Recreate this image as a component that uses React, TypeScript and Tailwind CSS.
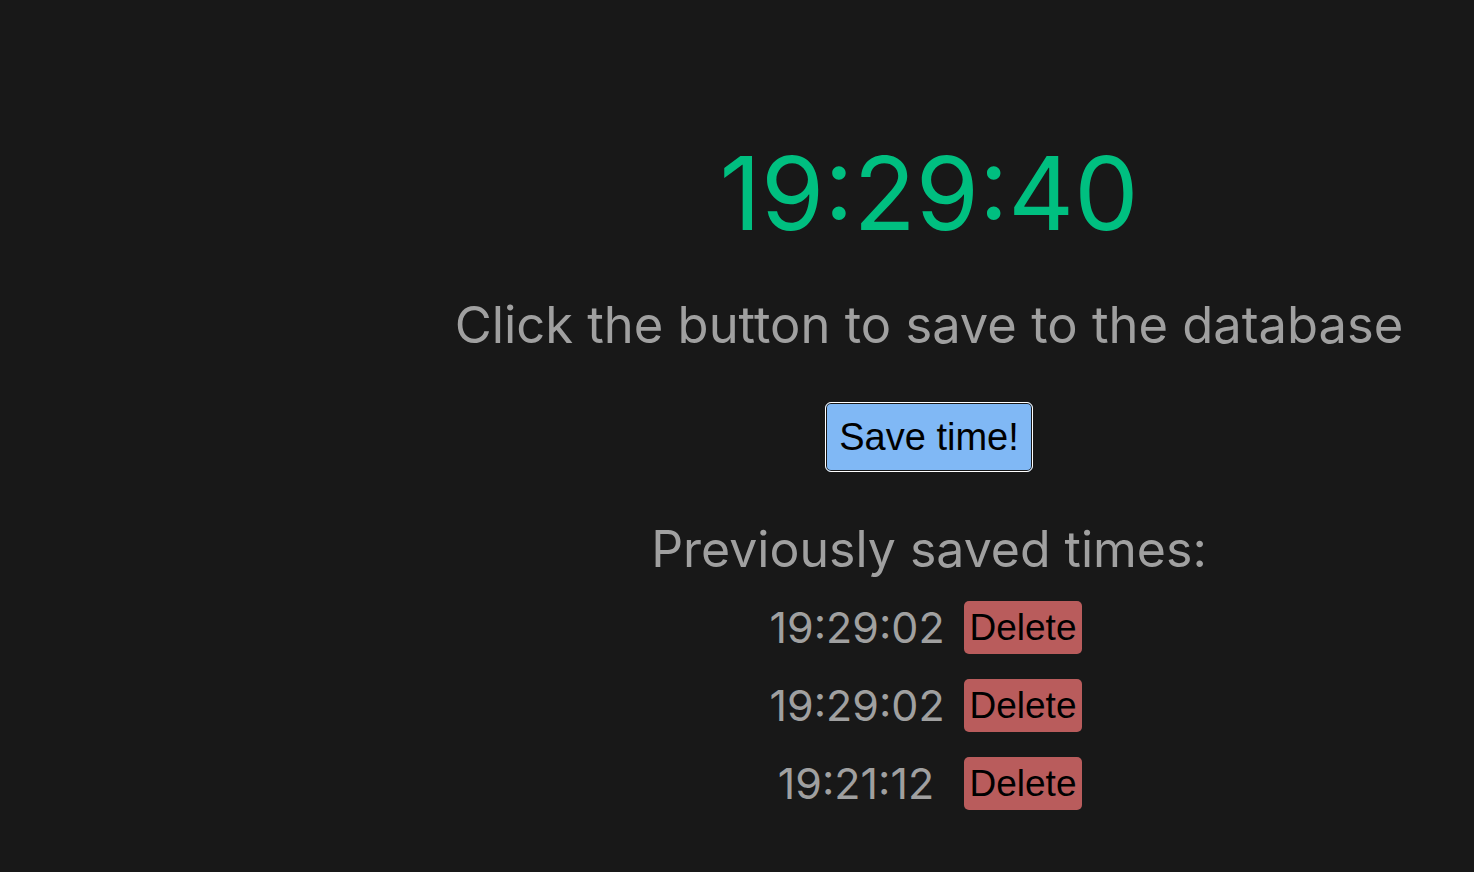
import { useState } from "react";

const initialTimes = ["19:29:02", "19:29:02", "19:21:12"];

export default function App() {
  const [times, setTimes] = useState(initialTimes);

  return (
    <div className="flex min-h-[872px] w-full bg-[#181818] font-['Inter',sans-serif]">
      <div className="w-[384px] shrink-0" />
      <main className="flex flex-1 flex-col items-center pt-[133px]">
        <h1 className="text-[102px] leading-[120px] font-normal text-[#00bf80]">19:29:40</h1>
        <p className="mt-[41px] text-[50.7px] leading-[62px] text-[#a0a0a0]">
          Click the button to save to the database
        </p>
        <button
          type="button"
          className="mt-[46px] h-[70px] rounded-[6px] border border-white bg-[#80b8f5] px-[13px] font-['Liberation_Sans',Arial,sans-serif] text-[38px] text-black shadow-[inset_0_0_0_1px_#181818]"
        >
          Save time!
        </button>
        <h2 className="mt-[46px] text-[50px] leading-[62px] text-[#a0a0a0]">Previously saved times:</h2>
        <ul className="mt-[21px] flex flex-col gap-[25px] pr-[6px]">
          {times.map((t, i) => (
            <li key={i} className="flex items-center gap-[21px]">
              <span className="w-[173px] text-center text-[43px] leading-[53px] text-[#a0a0a0]">{t}</span>
              <button
                type="button"
                onClick={() => setTimes(times.filter((_, j) => j !== i))}
                className="h-[53px] rounded-[5px] bg-[#b95c5c] px-[6px] font-['Liberation_Sans',Arial,sans-serif] text-[37px] leading-[53px] text-black"
              >
                Delete
              </button>
            </li>
          ))}
        </ul>
      </main>
    </div>
  );
}
